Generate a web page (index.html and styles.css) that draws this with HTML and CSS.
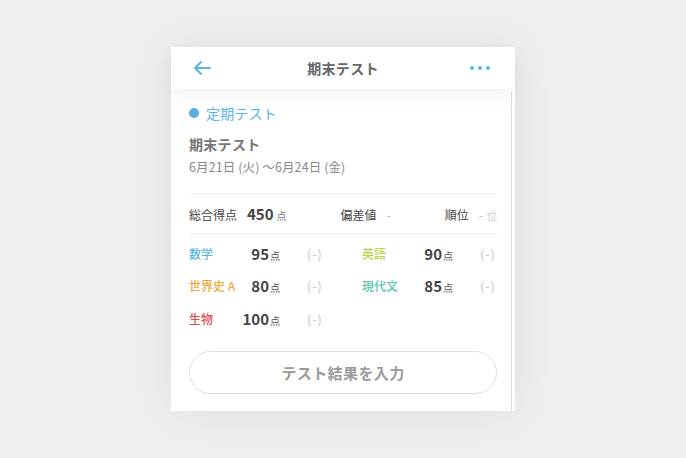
FILE: index.html
```html
<!DOCTYPE html>
<html lang="ja">
<head>
<meta charset="utf-8">
<link rel="stylesheet" href="styles.css">
</head>
<body>
<div class="card">
  <header class="topbar">
    <span class="back">
      <svg width="20" height="16" viewBox="0 0 20 16"><path d="M18 8H3M9 2L3 8l6 6" fill="none" stroke="#5ab6e6" stroke-width="2" stroke-linecap="round" stroke-linejoin="round"/></svg>
    </span>
    <span class="title">期末テスト</span>
    <span class="more"><i></i><i></i><i></i></span>
  </header>
  <div class="body">
    <div class="content">
      <div class="tag"><span class="dot"></span>定期テスト</div>
      <div class="name">期末テスト</div>
      <div class="date">6月21日 (火) 〜6月24日 (金)</div>
      <div class="stats">
        <div class="stat"><span class="label">総合得点</span><span class="big">450</span><span class="unit">点</span></div>
        <div class="stat"><span class="label">偏差値</span><span class="dash">-</span></div>
        <div class="stat"><span class="label">順位</span><span class="dash">-</span><span class="unit light">位</span></div>
      </div>
      <div class="subjects">
        <div class="subj"><span class="sname c-math">数学</span><span class="score">95<small>点</small></span><span class="paren">(-)</span></div>
        <div class="subj"><span class="sname c-eng">英語</span><span class="score">90<small>点</small></span><span class="paren">(-)</span></div>
        <div class="subj"><span class="sname c-hist">世界史 A</span><span class="score">80<small>点</small></span><span class="paren">(-)</span></div>
        <div class="subj"><span class="sname c-jp">現代文</span><span class="score">85<small>点</small></span><span class="paren">(-)</span></div>
        <div class="subj"><span class="sname c-bio">生物</span><span class="score">100<small>点</small></span><span class="paren">(-)</span></div>
      </div>
      <button class="btn">テスト結果を入力</button>
    </div>
    <div class="scrollbar"></div>
  </div>
</div>
</body>
</html>
```
FILE: styles.css
```css
* { box-sizing: border-box; }
html, body { margin: 0; padding: 0; }
body {
  width: 686px;
  height: 458px;
  background: #efefef;
  display: flex;
  align-items: center;
  justify-content: center;
  font-family: "Noto Sans CJK JP", "Noto Sans", sans-serif;
}
.card {
  width: 344px;
  background: #fff;
  box-shadow: 0 0 40px rgba(0,0,0,0.07);
  display: flex;
  flex-direction: column;
}
.topbar {
  height: 42px;
  display: flex;
  align-items: center;
  justify-content: space-between;
  padding: 0 25px 0 21px;
  position: relative;
  z-index: 1;
  background: #fff;
  box-shadow: 0 6px 16px rgba(0,0,0,0.055);
}
.back { width: 20px; height: 16px; display: flex; }
.title {
  font-size: 14px;
  font-weight: 700;
  color: #666;
  letter-spacing: 0.3px;
  margin-left: 4px;
}
.more { display: flex; gap: 4px; width: 20px; }
.more i { width: 4px; height: 4px; border-radius: 50%; background: #5ab6e6; display: block; }
.body {
  display: flex;
}
.content {
  flex: 1;
  padding: 14px 14px 17.5px 18px;
}
.scrollbar {
  width: 3px;
  margin: 3px 3px 0 0;
  background: #dedede;
}
.tag {
  display: flex;
  align-items: center;
  height: 20px;
  font-size: 14px;
  color: #5ab4e4;
  letter-spacing: 0.2px;
}
.dot {
  width: 10px; height: 10px; border-radius: 50%;
  background: #5aafdf;
  margin-right: 7px;
}
.name {
  margin-top: 11px;
  height: 20px;
  line-height: 20px;
  font-size: 14px;
  font-weight: 700;
  color: #767676;
  letter-spacing: 0.3px;
}
.date {
  margin-top: 4px;
  height: 18px;
  line-height: 18px;
  font-size: 12.5px;
  color: #888;
  letter-spacing: 0.1px;
}
.stats {
  margin-top: 17px;
  height: 41px;
  border-top: 1px solid #f0f0f0;
  border-bottom: 1px solid #ececec;
  display: flex;
  align-items: baseline;
  justify-content: space-between;
  padding-top: 9px;
}
.stat { display: flex; align-items: baseline; }
.label { font-size: 12px; color: #444; }
.big { font-size: 15px; font-weight: 700; color: #444; margin-left: 10px; }
.unit { font-size: 10px; color: #777; margin-left: 3px; }
.unit.light { color: #ccc; margin-left: 4px; }
.dash { font-size: 12px; color: #bbb; margin-left: 10px; }
.subjects {
  padding-top: 3px;
  display: grid;
  grid-template-columns: 134px 134px;
  column-gap: 39px;
}
.subj {
  height: 32.5px;
  display: flex;
  align-items: center;
}
.sname { flex: 1; font-size: 12px; font-weight: 500; }
.score { font-size: 15px; font-weight: 700; color: #444; }
.score small { font-size: 10px; font-weight: 400; color: #555; margin-left: 1px; }
.paren { margin-left: 27px; font-size: 12.5px; color: #c4c4c4; width: 16px; letter-spacing: 1px; white-space: nowrap; }
.c-math { color: #5ab6e6; }
.c-eng { color: #b8d44a; }
.c-hist { color: #f0a83a; }
.c-jp { color: #5cc4b6; }
.c-bio { color: #e24a4a; }
.btn {
  display: block;
  width: 308px;
  height: 43px;
  margin-top: 16px;
  border: 1px solid #dedede;
  border-radius: 22px;
  background: #fff;
  font-family: inherit;
  font-size: 15px;
  font-weight: 700;
  color: #9a9a9a;
  letter-spacing: 0.4px;
}
```
